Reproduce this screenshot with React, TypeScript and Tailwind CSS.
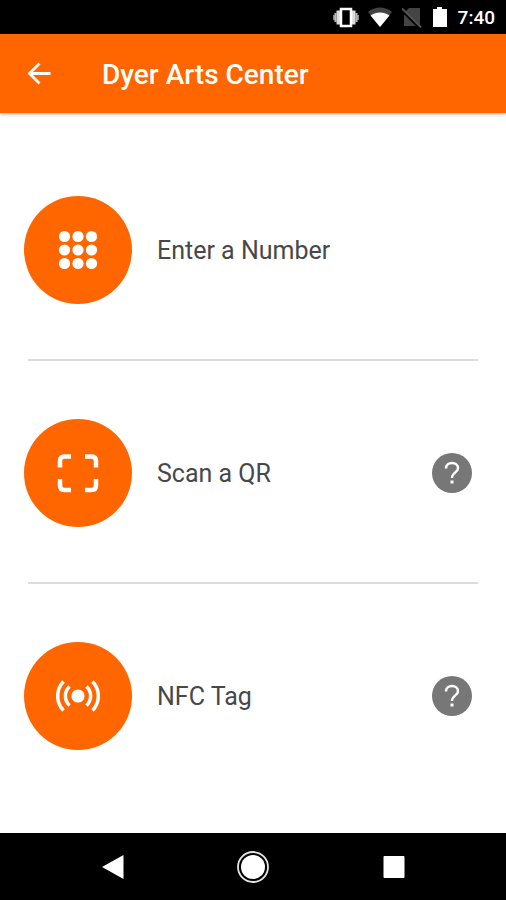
import type { ReactNode } from "react";

function StatusBar() {
  return (
    <div className="flex h-[34px] items-center justify-end bg-black pr-[11px] text-white">
      <svg width="28" height="22" viewBox="0 0 28 22" aria-hidden="true">
        <path d="M1 9h2v5H1zM25 9h2v5h-2z" fill="#888" />
        <path d="M2.500 7h2v9h-2zM23.500 7h2v9h-2z" fill="#bbb" />
        <path d="M4.500 4.500h4v14h-4zM19.500 4.500h4v14h-4z" fill="#ddd" />
        <rect x="9" y="3" width="10" height="17" fill="#000" stroke="#fff" strokeWidth="2.500" />
      </svg>
      <svg className="ml-2" width="24" height="22" viewBox="0 0 24 22" aria-hidden="true">
        <path d="M0 6C7 0 17 0 24 6L12 21z" fill="#444" />
        <path d="M2.500 9.500C8 5.500 16 5.500 21.500 9.500L12 21z" fill="#fff" />
      </svg>
      <svg className="ml-2.5" width="20" height="22" viewBox="0 0 20 22" aria-hidden="true">
        <path d="M7 2h11v18H2V7z" fill="#444" />
        <path d="M0 4.500l18 18" stroke="#000" strokeWidth="2.500" />
        <path d="M0 2.500l19 19" stroke="#555" strokeWidth="1.800" />
      </svg>
      <svg className="ml-2.5" width="16" height="22" viewBox="0 0 16 22" aria-hidden="true">
        <path d="M5 1h5v2h5v18H1V3h4z" fill="#fff" />
      </svg>
      <span className="ml-2.5 pt-0.5 text-[19px] font-medium">7:40</span>
    </div>
  );
}

function AppBar({ title }: { title: string }) {
  return (
    <header className="z-10 flex h-[79px] items-center bg-[#ff6600] px-6 text-white shadow-[0_1px_4px_rgba(0,0,0,0.35)]">
      <button type="button" aria-label="Back">
        <svg width="30" height="30" viewBox="0 0 30 30" fill="none" stroke="#fff" strokeWidth="2.800" aria-hidden="true">
          <path d="M26.500 14.500H6M15.500 4.500L5.500 14.500L15.500 24.500" />
        </svg>
      </button>
      <h1 className="ml-12 pt-0.5 text-[28px] font-medium">{title}</h1>
    </header>
  );
}

function KeypadIcon() {
  const steps = [8.5, 22, 35.5];

  return (
    <svg width="44" height="44" viewBox="0 0 44 44" fill="#fff" aria-hidden="true">
      {steps.map((cy) =>
        steps.map((cx) => <circle key={`${cx}-${cy}`} cx={cx} cy={cy} r="5.600" />)
      )}
    </svg>
  );
}

function ScanIcon() {
  return (
    <svg width="44" height="44" viewBox="0 0 44 44" fill="none" stroke="#fff" strokeWidth="4.500" aria-hidden="true">
      <path d="M4 16.500V10q0-4.500 4.500-4.500H15M29 5.500h6.500q4.500 0 4.500 4.500v6.500M40 28v6.500q0 4.500-4.500 4.500H29M15 39H8.500Q4 39 4 34.500V28" />
    </svg>
  );
}

function NfcIcon() {
  return (
    <svg width="44" height="44" viewBox="0 0 44 44" fill="none" stroke="#fff" strokeWidth="3.500" aria-hidden="true">
      <circle cx="22" cy="22" r="6.600" fill="#fff" stroke="none" />
      <path d="M13.500 12.500a13 13 0 0 0 0 19M30.500 12.500a13 13 0 0 1 0 19M7.500 7.500a21 21 0 0 0 0 29M36.500 7.500a21 21 0 0 1 0 29" />
    </svg>
  );
}

function Option({ label, icon, help }: { label: string; icon: ReactNode; help?: boolean }) {
  return (
    <div className="flex items-center justify-between pt-[58px] pb-[55px]">
      <button type="button" className="flex items-center gap-[25px] text-[25px] text-[#484848]">
        <span className="flex size-[108px] items-center justify-center rounded-full bg-[#ff6600]">
          {icon}
        </span>
        <span className="pt-0.5">{label}</span>
      </button>
      {help ? (
        <button
          type="button"
          aria-label={`Help: ${label}`}
          className="mr-2.5 flex size-10 items-center justify-center rounded-full bg-[#777]"
        >
          <svg width="16" height="24" viewBox="0 0 16 24" fill="none" stroke="#fff" strokeWidth="2.400" aria-hidden="true">
            <path d="M2 7.500C2 4 4.500 2 8 2s6 2 6 5.200C14 11.500 8 11.500 8 17" />
            <path d="M6.500 19.500h3v3h-3z" fill="#fff" stroke="none" />
          </svg>
        </button>
      ) : null}
    </div>
  );
}

function NavBar() {
  return (
    <nav className="flex h-[67px] items-center justify-around bg-black px-[42px]">
      <button type="button" aria-label="Back">
        <svg width="32" height="32" viewBox="0 0 32 32" fill="#fff" aria-hidden="true">
          <path d="M27.500 4v24L6 16z" />
        </svg>
      </button>
      <button type="button" aria-label="Home">
        <svg width="32" height="32" viewBox="0 0 32 32" aria-hidden="true">
          <circle cx="16" cy="16" r="15" fill="none" stroke="#e5e5e5" strokeWidth="1.800" />
          <circle cx="16" cy="16" r="12" fill="#fff" />
        </svg>
      </button>
      <button type="button" aria-label="Recent apps">
        <svg width="32" height="32" viewBox="0 0 32 32" fill="#fff" aria-hidden="true">
          <rect x="5.500" y="5" width="21" height="22" rx="1" />
        </svg>
      </button>
    </nav>
  );
}

export default function App() {
  return (
    <div className="flex min-h-screen flex-col bg-white font-['Roboto',sans-serif]">
      <StatusBar />
      <AppBar title="Dyer Arts Center" />
      <main className="flex-1 px-6 pt-[25px]">
        <Option label="Enter a Number" icon={<KeypadIcon />} />
        <hr className="mx-1 border-t-2 border-[#dcdcdc]" />
        <Option label="Scan a QR" icon={<ScanIcon />} help />
        <hr className="mx-1 border-t-2 border-[#dcdcdc]" />
        <Option label="NFC Tag" icon={<NfcIcon />} help />
      </main>
      <NavBar />
    </div>
  );
}
